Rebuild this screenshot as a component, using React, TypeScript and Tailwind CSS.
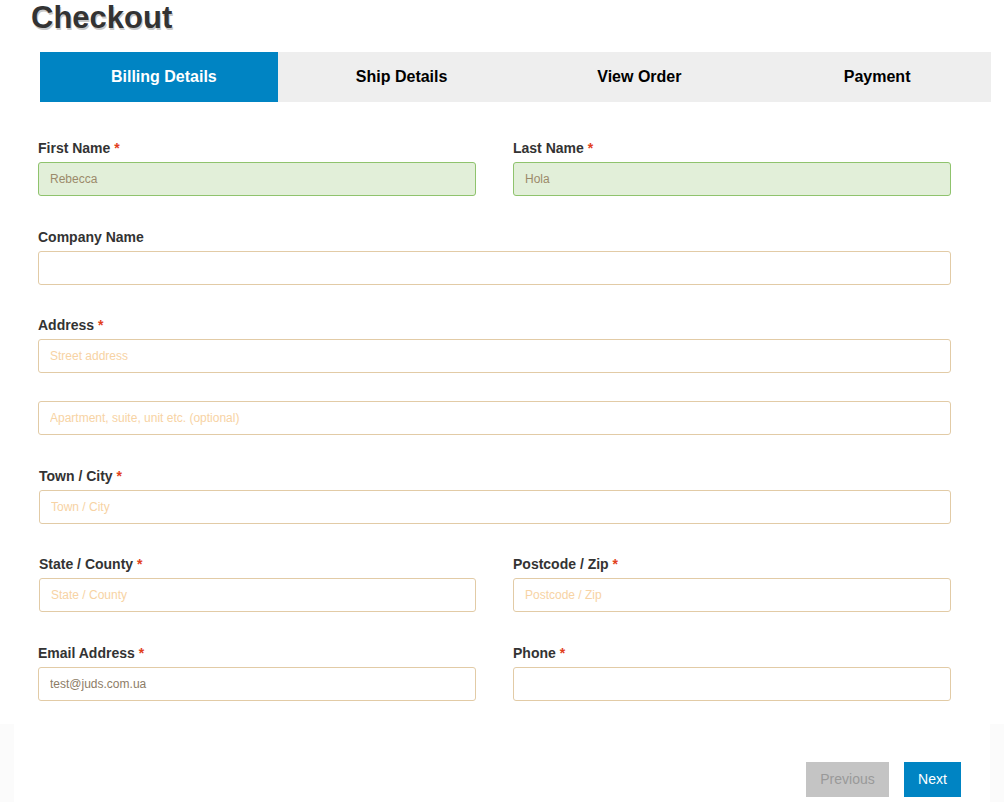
import React from "react";

const TABS = ["Billing Details", "Ship Details", "View Order", "Payment"];

function Label({ text, required }: { text: string; required?: boolean }) {
  return (
    <label className="block text-[14px] leading-[20px] font-bold text-[#333] mb-[4px]">
      {text}
      {required && <span className="text-[#e2401c]"> *</span>}
    </label>
  );
}

function Input({
  placeholder,
  value,
  valid,
}: {
  placeholder?: string;
  value?: string;
  valid?: boolean;
}) {
  return (
    <input
      readOnly
      placeholder={placeholder}
      defaultValue={value}
      className={`block w-full h-[34px] rounded-[3px] border px-[11px] pb-[1px] text-[12px] outline-none placeholder:text-[#f7d3a4] ${
        valid
          ? "bg-[#e2efd9] border-[#8fc36d] text-[#9b8a6a]"
          : "bg-white border-[#e2cba6] text-[#8d7c66]"
      }`}
    />
  );
}

export default function App() {
  return (
    <div className="w-[1004px] h-[802px] bg-white overflow-hidden font-['Liberation_Sans',Arial,sans-serif]">
      <h1 className="pl-[31px] pt-[1px] text-[31px] leading-[34px] font-bold text-[#333] [text-shadow:1px_2px_0_#c8c8c8]">
        Checkout
      </h1>

      {/* Steps */}
      <div className="mt-[17px] ml-[40px] w-[951px] h-[50px] grid grid-cols-4 bg-[#eeeeee]">
        {TABS.map((t, i) => (
          <div
            key={t}
            className={`flex items-center justify-center pl-[10px] text-[16px] font-bold ${
              i === 0 ? "bg-[#0084c3] text-white" : "text-black"
            }`}
          >
            {t}
          </div>
        ))}
      </div>

      {/* Form */}
      <div className="ml-[38px] w-[913px] pt-[36px] flex flex-col">
        <div className="grid grid-cols-2 gap-x-[37px]">
          <div>
            <Label text="First Name" required />
            <Input value="Rebecca" valid />
          </div>
          <div>
            <Label text="Last Name" required />
            <Input value="Hola" valid />
          </div>
        </div>

        <div className="mt-[31px]">
          <Label text="Company Name" />
          <Input />
        </div>

        <div className="mt-[30px]">
          <Label text="Address" required />
          <Input placeholder="Street address" />
          <div className="mt-[28px]">
            <Input placeholder="Apartment, suite, unit etc. (optional)" />
          </div>
        </div>

        <div className="mt-[31px] pl-[1px]">
          <Label text="Town / City" required />
          <Input placeholder="Town / City" />
        </div>

        <div className="mt-[30px] grid grid-cols-2 gap-x-[37px]">
          <div className="pl-[1px]">
            <Label text="State / County" required />
            <Input placeholder="State / County" />
          </div>
          <div>
            <Label text="Postcode / Zip" required />
            <Input placeholder="Postcode / Zip" />
          </div>
        </div>

        <div className="mt-[31px] grid grid-cols-2 gap-x-[37px]">
          <div>
            <Label text="Email Address" required />
            <Input value="test@juds.com.ua" />
          </div>
          <div>
            <Label text="Phone" required />
            <Input />
          </div>
        </div>
      </div>

      {/* Footer */}
      <div className="mt-[23px] h-[80px] bg-[#fbfbfb] px-[14px] w-[1004px]">
        <div className="h-full bg-white flex justify-end items-start pt-[38px] pr-[29px] gap-[15px]">
          <button className="h-[35px] w-[83px] bg-[#c4c4c4] text-[#999] text-[14px]">
            Previous
          </button>
          <button className="h-[35px] w-[57px] bg-[#0084c3] text-white text-[14px]">
            Next
          </button>
        </div>
      </div>
    </div>
  );
}
